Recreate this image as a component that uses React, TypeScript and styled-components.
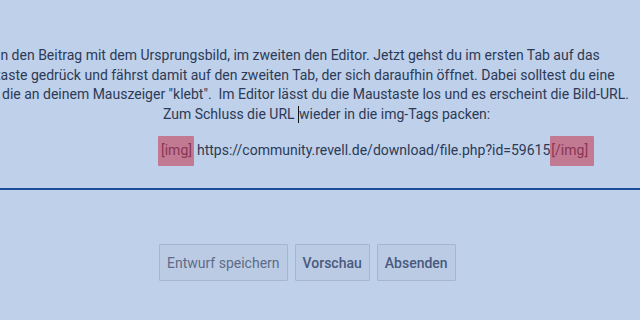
import styled, { createGlobalStyle } from 'styled-components';

const GlobalStyle = createGlobalStyle`
  html, body {
    margin: 0;
    padding: 0;
    background-color: #bfd0ea;
    overflow: hidden;
  }
  body {
    font-family: Roboto, 'Liberation Sans', sans-serif;
  }
`;

const Page = styled.div`
  width: 640px;
  height: 320px;
  overflow: hidden;
  display: flex;
  flex-direction: column;
`;

const Post = styled.div`
  padding-top: 46px;
  color: #2c3a56;
  font-size: 14px;
  line-height: 19.5px;
`;

const Line = styled.div<{ $indent?: number }>`
  white-space: nowrap;
  margin-left: ${(p) => p.$indent ?? 0}px;
`;

const CodeLine = styled.div`
  white-space: nowrap;
  margin-top: 12px;
  margin-left: 158px;
  display: flex;
  align-items: center;
  height: 30px;
`;

const Mark = styled.span<{ $pad?: string }>`
  display: inline-flex;
  align-items: center;
  align-self: stretch;
  background-color: #c27a93;
  color: #8a3553;
  padding: ${(p) => p.$pad ?? '0 2px 0 3px'};
  border-radius: 1px;
`;

const Url = styled.span`
  margin-left: 3px;
`;

const Caret = styled.span`
  display: inline-block;
  width: 0;
  height: 17px;
  border-left: 1px solid #111;
  vertical-align: -4px;
`;

const Rule = styled.hr`
  margin: 22px 0 0;
  border: none;
  height: 2px;
  background-color: #1d4c9c;
`;

const Actions = styled.div`
  display: flex;
  gap: 7px;
  margin-top: 54px;
  padding-left: 159px;
`;

const Button = styled.button<{ $primary?: boolean }>`
  height: 37px;
  padding: 0 7px;
  background-color: #bccbe4;
  border: 1px solid #a6b6d0;
  border-radius: 1px;
  font-family: Roboto, 'Liberation Sans', sans-serif;
  font-size: 14px;
  font-weight: ${(p) => (p.$primary ? 500 : 400)};
  color: ${(p) => (p.$primary ? '#485a7e' : '#5d6c88')};
  cursor: pointer;
`;

export default function App() {
  return (
    <Page>
      <GlobalStyle />
      <Post>
        <Line $indent={-3}>
          in den Beitrag mit dem Ursprungsbild, im zweiten den Editor. Jetzt gehst du im ersten Tab auf das
        </Line>
        <Line $indent={-4}>
          taste gedrück und fährst damit auf den zweiten Tab, der sich daraufhin öffnet. Dabei solltest du eine
        </Line>
        <Line $indent={2}>
          die an deinem Mauszeiger "klebt".&nbsp; Im Editor lässt du die Maustaste los und es erscheint die Bild-URL.
        </Line>
        <Line $indent={163}>
          Zum Schluss die URL <Caret />wieder in die img-Tags packen:
        </Line>
        <CodeLine>
          <Mark>[img]</Mark>
          <Url>https://community.revell.de/download/file.php?id=59615</Url>
          <Mark $pad="0 6px 0 1px">[/img]</Mark>
        </CodeLine>
      </Post>
      <Rule />
      <Actions>
        <Button>Entwurf speichern</Button>
        <Button $primary>Vorschau</Button>
        <Button $primary>Absenden</Button>
      </Actions>
    </Page>
  );
}
